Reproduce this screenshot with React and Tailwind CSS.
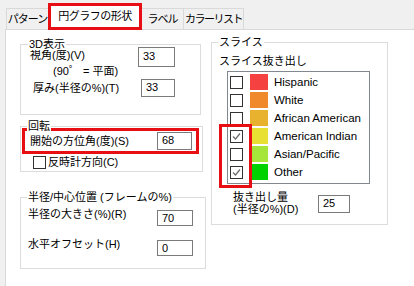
import React from "react";

const slices = [
  { name: "Hispanic", color: "bg-[#f64141]", checked: false },
  { name: "White", color: "bg-[#f0882c]", checked: false },
  { name: "African American", color: "bg-[#e8b22e]", checked: false },
  { name: "American Indian", color: "bg-[#e8e032]", checked: true },
  { name: "Asian/Pacific", color: "bg-[#a6e63a]", checked: false },
  { name: "Other", color: "bg-[#00d200]", checked: true },
];

function Box({ checked }) {
  return (
    <div className="w-[13px] h-[13px] shrink-0 border border-[#333] bg-white flex items-center justify-center">
      {checked && (
        <svg width="11" height="11" viewBox="0 0 11 11">
          <polyline points="2,5.5 4.5,8 9,2.5" fill="none" stroke="#6b6b6b" strokeWidth="1.2" />
        </svg>
      )}
    </div>
  );
}

function Field({ value, className }) {
  return (
    <div className={`shrink-0 border border-[#7a7a7a] bg-white pl-[4px] leading-[15px] text-[11px] ${className}`}>
      {value}
    </div>
  );
}

function Group({ title, className, titleLeft = "left-[6px]", children }) {
  return (
    <div className={`relative border border-[#dcdcdc] ${className}`}>
      <span className={`absolute -top-[7px] ${titleLeft} px-[1px] bg-white leading-[12px]`}>{title}</span>
      {children}
    </div>
  );
}

export default function App() {
  return (
    <div className="w-[414px] h-[286px] overflow-hidden bg-[#f0f0f0] text-black text-[11px] leading-[14px] font-['Liberation_Sans','Noto_Sans_CJK_JP',sans-serif]">
      {/* tabs */}
      <div className="flex items-end h-[29px] pl-[6px]">
        <div className="w-[43px] h-[21px] border border-b-0 border-[#d9d9d9] flex items-center justify-center tracking-[-1px]">
          パターン
        </div>
        <div className="relative z-10 -ml-[1px] -mb-[1px] w-[94px] h-[27px] border-[3px] border-[#e80f14] bg-white flex items-center justify-center tracking-[-0.5px] pb-[1px]">
          円グラフの形状
        </div>
        <div className="-ml-[1px] w-[43px] h-[21px] border border-b-0 border-[#d9d9d9] flex items-center justify-center tracking-[-1px]">
          ラベル
        </div>
        <div className="-ml-[1px] w-[61px] h-[21px] border border-b-0 border-[#d9d9d9] flex items-center justify-center tracking-[-1.5px]">
          カラーリスト
        </div>
      </div>

      {/* panel */}
      <div className="ml-[5px] h-[257px] border-t border-l border-[#d9d9d9] bg-white flex pl-[14px] pt-[14px]">
        <div className="flex flex-col w-[186px] shrink-0">
          <Group title="3D表示" className="w-[181px] h-[71px]" titleLeft="left-[7px]">
            <div className="flex mt-[2px]">
              <div className="w-[117px] pl-[9px] pt-[1px]">
                <div>視角(度)(V)</div>
                <div className="pl-[23px] mt-[2px]">(90゜ = 平面)</div>
              </div>
              <Field value="33" className="w-[37px] h-[20px] pt-[1px]" />
            </div>
            <div className="flex items-center mt-[1px] h-[18px]">
              <div className="w-[120px] pl-[12px]">厚み(半径の%)(T)</div>
              <Field value="33" className="w-[34px] h-[18px]" />
            </div>
          </Group>

          <Group title="回転" className="mt-[11px] w-[183px] h-[46px]">
            <div className="ml-[1px] mt-[1px] w-[177px] h-[26px] border-[3px] border-[#e80f14] flex items-center">
              <div className="w-[132px] pl-[5px]">開始の方位角(度)(S)</div>
              <Field value="68" className="w-[35px] h-[18px]" />
            </div>
            <div className="flex items-center mt-[1px] pl-[12px]">
              <Box checked={false} />
              <span className="ml-[2px]">反時計方向(C)</span>
            </div>
          </Group>

          <Group title="半径/中心位置 (フレームの%)" className="mt-[25px] w-[186px] h-[72px]">
            <div className="flex items-start mt-[9px]">
              <div className="w-[136px] pl-[7px]">半径の大きさ(%)(R)</div>
              <Field value="70" className="mt-[3px] w-[36px] h-[16px]" />
            </div>
            <div className="flex items-start mt-[11px]">
              <div className="w-[136px] pl-[7px]">水平オフセット(H)</div>
              <Field value="0" className="mt-[3px] w-[36px] h-[16px]" />
            </div>
          </Group>
        </div>

        <div className="ml-[5px] -mt-[2px]">
          <Group title="スライス" className="w-[177px] h-[183px]">
            <div className="pl-[7px] mt-[11px]">スライス抜き出し</div>
            <div className="ml-[15px] mt-[3px] w-[143px] h-[113px] border border-[#828790] bg-white pt-[1px]">
              {slices.map((s) => (
                <div key={s.name} className="h-[18px] flex items-center pl-[2px]">
                  <Box checked={s.checked} />
                  <div className={`ml-[7px] w-[18px] h-[16px] shrink-0 ${s.color}`} />
                  <span className="ml-[6px] text-[11.5px]">{s.name}</span>
                </div>
              ))}
            </div>
            <div className="flex mt-[7px]">
              <div className="w-[106px] pl-[21px] leading-[12px]">
                <div>抜き出し量</div>
                <div>(半径の%)(D)</div>
              </div>
              <Field value="25" className="mt-[4px] w-[32px] h-[18px]" />
            </div>
            <div className="absolute left-[7px] top-[81px] w-[33px] h-[64px] border-[3px] border-[#e80f14]" />
          </Group>
        </div>
      </div>
    </div>
  );
}
